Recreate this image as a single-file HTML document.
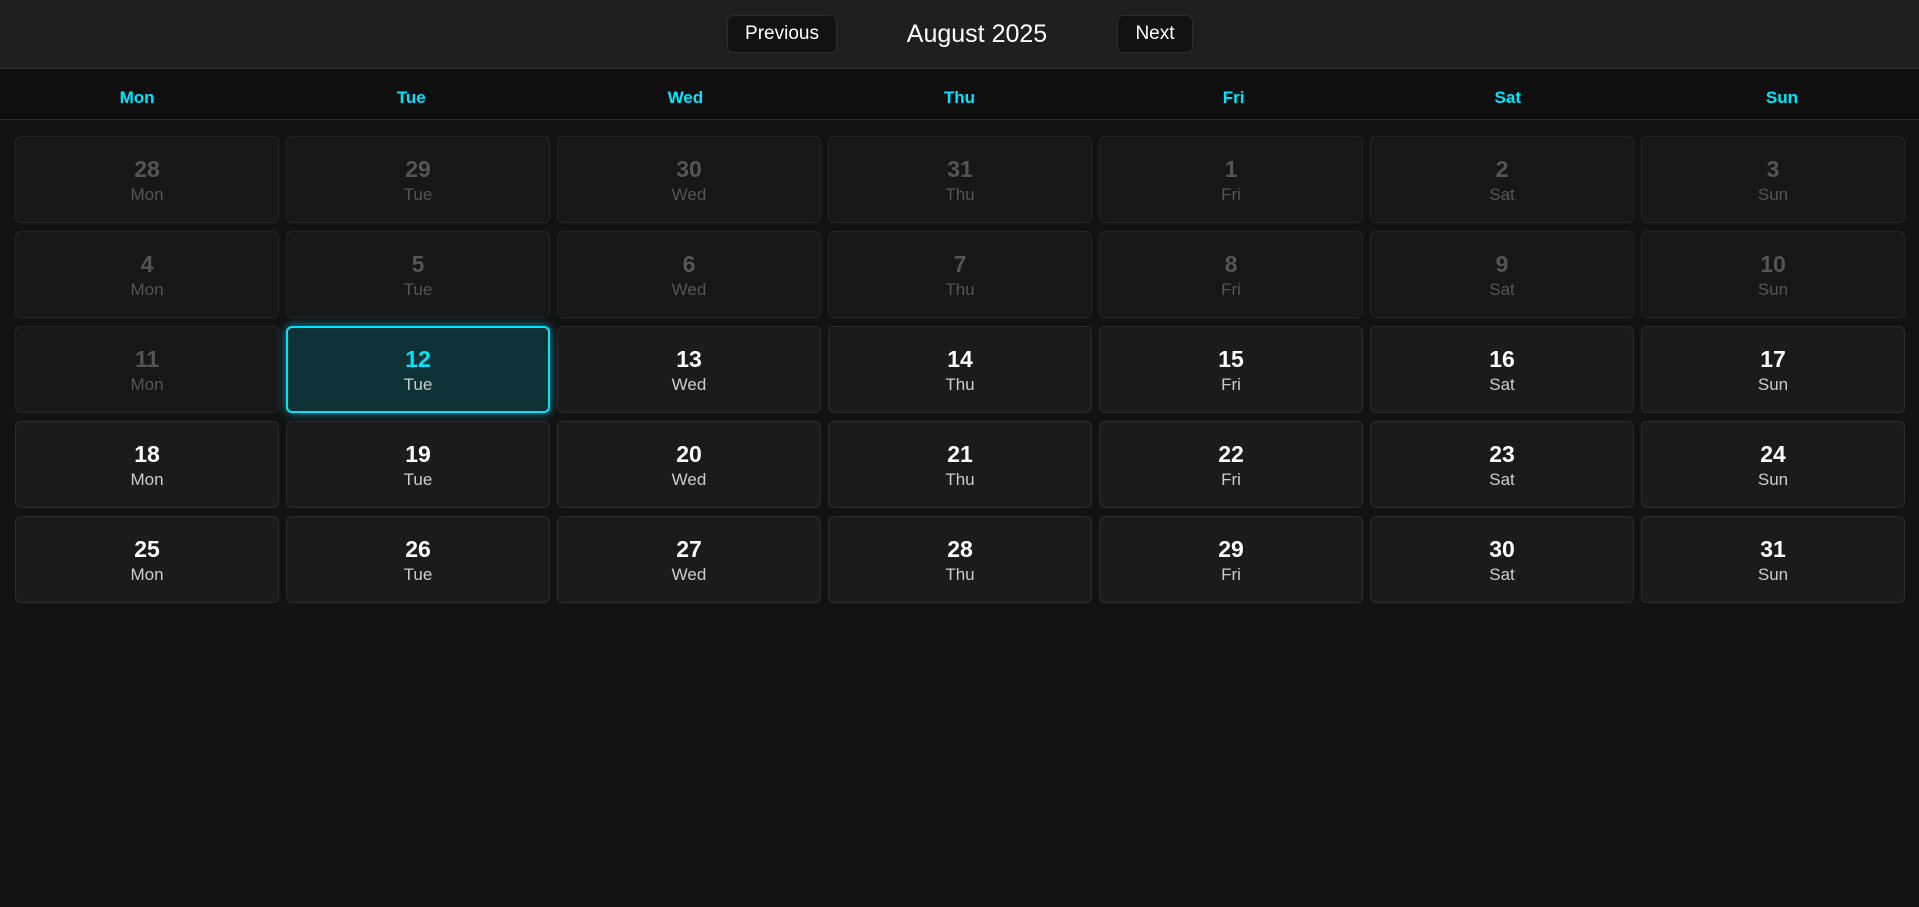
<!DOCTYPE html>
<html><head><style>
*{box-sizing:border-box;margin:0;padding:0}
body{width:1919px;height:907px;background:#121212;font-family:"Liberation Sans",sans-serif;overflow:hidden}
.hdr{height:69px;background:#1f1f1f;border-bottom:1px solid #333;position:relative}
.btn{position:absolute;top:15px;height:38px;background:#121212;border:1px solid #2c2c2c;border-radius:6px;color:#fff;font-size:19px;line-height:36px;text-align:center}
.title{position:absolute;left:0;width:1954px;top:20px;text-align:center;color:#fff;font-size:25px}
.wk{height:51px;background:#0f0f0f;border-bottom:1px solid #2e2e2e;display:flex}
.wk div{flex:1;text-align:center;color:#00e5ff;font-weight:bold;font-size:17px;line-height:58px}
.grid{position:absolute;left:15px;top:136px;display:grid;grid-template-columns:repeat(7,264px);grid-auto-rows:87px;column-gap:7px;row-gap:8px}
.c{background:#1b1b1b;border:1px solid #2b2b2b;border-radius:6px;text-align:center;color:#fff}
.c b{display:block;font-size:23px;margin-top:19px;line-height:26px}
.c span{display:block;font-size:17px;color:#ccc;margin-top:3px}
.o{background:#171717;border-color:#242424}
.o b,.o span{color:#555}
.s{background:#0f3236;border:2px solid #00e5ff;box-shadow:0 0 10px rgba(0,229,255,.6)}
.s b{color:#00e5ff;margin-top:18px}
</style></head><body>
<div class="hdr">
<div class="btn" style="left:727px;width:110px">Previous</div>
<div class="title">August 2025</div>
<div class="btn" style="left:1117px;width:76px">Next</div>
</div>
<div class="wk"><div>Mon</div><div>Tue</div><div>Wed</div><div>Thu</div><div>Fri</div><div>Sat</div><div>Sun</div></div>
<div class="grid">
<div class="c o"><b>28</b><span>Mon</span></div><div class="c o"><b>29</b><span>Tue</span></div><div class="c o"><b>30</b><span>Wed</span></div><div class="c o"><b>31</b><span>Thu</span></div><div class="c o"><b>1</b><span>Fri</span></div><div class="c o"><b>2</b><span>Sat</span></div><div class="c o"><b>3</b><span>Sun</span></div>
<div class="c o"><b>4</b><span>Mon</span></div><div class="c o"><b>5</b><span>Tue</span></div><div class="c o"><b>6</b><span>Wed</span></div><div class="c o"><b>7</b><span>Thu</span></div><div class="c o"><b>8</b><span>Fri</span></div><div class="c o"><b>9</b><span>Sat</span></div><div class="c o"><b>10</b><span>Sun</span></div>
<div class="c o"><b>11</b><span>Mon</span></div><div class="c s"><b>12</b><span>Tue</span></div><div class="c"><b>13</b><span>Wed</span></div><div class="c"><b>14</b><span>Thu</span></div><div class="c"><b>15</b><span>Fri</span></div><div class="c"><b>16</b><span>Sat</span></div><div class="c"><b>17</b><span>Sun</span></div>
<div class="c"><b>18</b><span>Mon</span></div><div class="c"><b>19</b><span>Tue</span></div><div class="c"><b>20</b><span>Wed</span></div><div class="c"><b>21</b><span>Thu</span></div><div class="c"><b>22</b><span>Fri</span></div><div class="c"><b>23</b><span>Sat</span></div><div class="c"><b>24</b><span>Sun</span></div>
<div class="c"><b>25</b><span>Mon</span></div><div class="c"><b>26</b><span>Tue</span></div><div class="c"><b>27</b><span>Wed</span></div><div class="c"><b>28</b><span>Thu</span></div><div class="c"><b>29</b><span>Fri</span></div><div class="c"><b>30</b><span>Sat</span></div><div class="c"><b>31</b><span>Sun</span></div>
</div>
</body></html>
